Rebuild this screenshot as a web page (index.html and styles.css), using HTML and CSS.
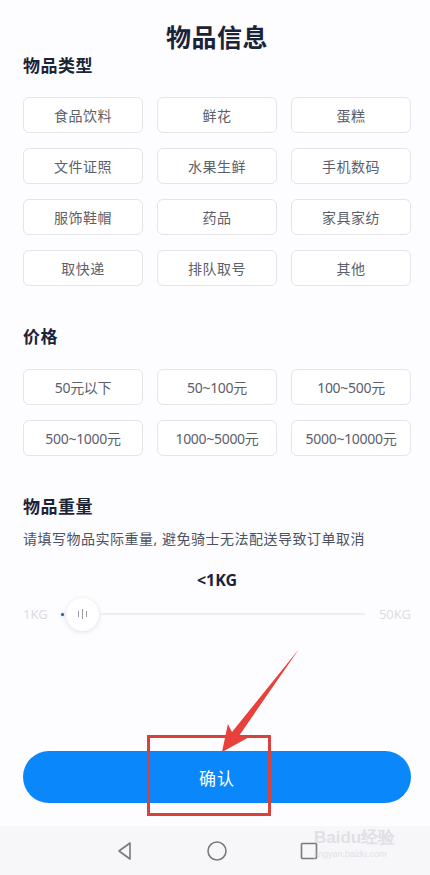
FILE: index.html
```html
<!DOCTYPE html>
<html lang="zh">
<head>
  <meta charset="UTF-8" />
  <meta name="viewport" content="width=device-width, initial-scale=1" />
  <title>物品信息</title>
  <link rel="stylesheet" href="styles.css">
</head>
<body>

  <div class="pagina">
    <h1 class="titulo">物品信息</h1>

    <!-- Tipo de artículo -->
    <h2 class="seccion">物品类型</h2>
    <div class="rejilla">
      <div class="opcion">食品饮料</div>
      <div class="opcion">鲜花</div>
      <div class="opcion">蛋糕</div>
      <div class="opcion">文件证照</div>
      <div class="opcion">水果生鲜</div>
      <div class="opcion">手机数码</div>
      <div class="opcion">服饰鞋帽</div>
      <div class="opcion">药品</div>
      <div class="opcion">家具家纺</div>
      <div class="opcion">取快递</div>
      <div class="opcion">排队取号</div>
      <div class="opcion">其他</div>
    </div>

    <!-- Precio -->
    <h2 class="seccion sep">价格</h2>
    <div class="rejilla precios">
      <div class="opcion">50元以下</div>
      <div class="opcion">50~100元</div>
      <div class="opcion">100~500元</div>
      <div class="opcion">500~1000元</div>
      <div class="opcion">1000~5000元</div>
      <div class="opcion">5000~10000元</div>
    </div>

    <!-- Peso -->
    <h2 class="seccion sep">物品重量</h2>
    <p class="nota">请填写物品实际重量, 避免骑士无法配送导致订单取消</p>
    <div class="peso">&lt;1KG</div>

    <div class="deslizador">
      <span class="extremo">1KG</span>
      <div class="pista">
        <span class="punto"></span>
        <span class="pomo"><i></i><i class="alto"></i><i></i></span>
        <span class="linea"></span>
      </div>
      <span class="extremo">50KG</span>
    </div>

    <button class="confirmar">确认</button>
  </div>

  <!-- Barra de navegación -->
  <nav class="navbar">
    <svg width="20" height="20" viewBox="0 0 20 20"><path d="M15 2 L4 10 L15 18 Z" fill="none" stroke="#7a7a7e" stroke-width="1.6" stroke-linejoin="round"/></svg>
    <svg width="22" height="22" viewBox="0 0 22 22"><circle cx="11" cy="11" r="9" fill="none" stroke="#7a7a7e" stroke-width="1.6"/></svg>
    <svg width="20" height="20" viewBox="0 0 20 20"><rect x="2.5" y="2.5" width="15" height="15" rx="1" fill="none" stroke="#7a7a7e" stroke-width="1.6"/></svg>
    <span class="marca">Baidu经验<small>jingyan.baidu.com</small></span>
  </nav>

  <!-- Anotación: recuadro y flecha -->
  <div class="recuadro"></div>
  <svg class="flecha" width="430" height="875" viewBox="0 0 430 875">
    <polygon points="222,752 227.9,723.9 232,731.9 299,649 238.4,736.7 247.1,738.3" fill="#e8403a"/>
  </svg>

</body>
</html>
```

FILE: styles.css
```css
/* ---------- Base ---------- */
*{box-sizing:border-box}
body{
  margin:0;
  width:430px;
  height:875px;
  position:relative;
  overflow:hidden;
  background:#fdfcff;
  font-family:"Noto Sans","Noto Sans CJK SC",sans-serif;
  color:#1b2336;
}
.pagina{
  padding:0 19px 0 23px;
}

/* ---------- Títulos ---------- */
.titulo{
  margin:20px 0 0;
  font-size:25px;
  line-height:34px;
  text-align:center;
  font-weight:700;
  letter-spacing:.5px;
}
.seccion{
  margin:0;
  font-size:17px;
  line-height:24px;
  font-weight:700;
  letter-spacing:.5px;
}
.seccion.sep{margin-top:39px}

/* ---------- Opciones ---------- */
.rejilla{
  display:grid;
  grid-template-columns:repeat(3,120px);
  grid-auto-rows:36px;
  column-gap:14px;
  row-gap:15px;
  margin-top:19px;
}
.seccion.sep + .rejilla{margin-top:20px}
.opcion{
  display:flex;
  align-items:center;
  justify-content:center;
  background:#fff;
  border:1px solid #e5e4ea;
  border-radius:6px;
  font-size:14px;
  color:#5c606b;
  letter-spacing:.5px;
}
.precios .opcion{
  letter-spacing:-.3px;
}

/* ---------- Peso ---------- */
.nota{
  margin:10px 0 0;
  font-size:14px;
  line-height:20px;
  color:#4d5260;
  letter-spacing:.5px;
}
.peso{
  margin-top:20px;
  text-align:center;
  font-size:16px;
  line-height:22px;
  font-weight:700;
  color:#1b2336;
}
.deslizador{
  display:flex;
  align-items:center;
  height:34px;
  margin-top:6px;
}
.extremo{
  font-size:13px;
  color:#dcdce0;
}
.pista{
  flex:1;
  display:flex;
  align-items:center;
  margin:0 14px 0 13px;
}
.punto{
  width:3px;height:3px;
  border-radius:50%;
  background:#1a5c9a;
  box-shadow:0 0 3px #7fd0ff;
  margin-right:2px;
}
.pomo{
  width:33px;height:33px;
  border-radius:50%;
  background:#fff;
  box-shadow:0 1px 5px rgba(0,0,0,.12);
  display:flex;
  align-items:center;
  justify-content:center;
  gap:3px;
}
.pomo i{
  display:block;
  width:1px;height:6px;
  background:#9a9ca4;
}
.pomo i.alto{height:10px}
.linea{
  flex:1;
  height:2px;
  background:#eeeef1;
}

/* ---------- Botón ---------- */
.confirmar{
  display:block;
  width:388px;
  height:52px;
  margin-top:120px;
  border:0;
  border-radius:26px;
  background:#0a88fb;
  color:#fff;
  font-family:inherit;
  font-size:17px;
  letter-spacing:1px;
}

/* ---------- Navegación ---------- */
.navbar{
  position:absolute;
  left:0;right:0;bottom:0;
  height:49px;
  padding-left:4px;
  background:#f7f6f9;
  display:flex;
  align-items:center;
  justify-content:center;
  gap:71px;
}
.marca{
  position:absolute;
  left:314px;
  top:2px;
  font-family:"Liberation Sans",Arial,sans-serif;
  font-size:17px;
  font-weight:700;
  line-height:20px;
  color:rgba(205,205,212,.55);
}
.marca small{
  display:block;
  font-size:9px;
  font-weight:400;
  line-height:12px;
}

/* ---------- Anotación ---------- */
.recuadro{
  position:absolute;
  left:147px;
  top:735px;
  width:124px;
  height:81px;
  border:3px solid #d9413a;
}
.flecha{
  position:absolute;
  left:0;top:0;
  pointer-events:none;
}
```
